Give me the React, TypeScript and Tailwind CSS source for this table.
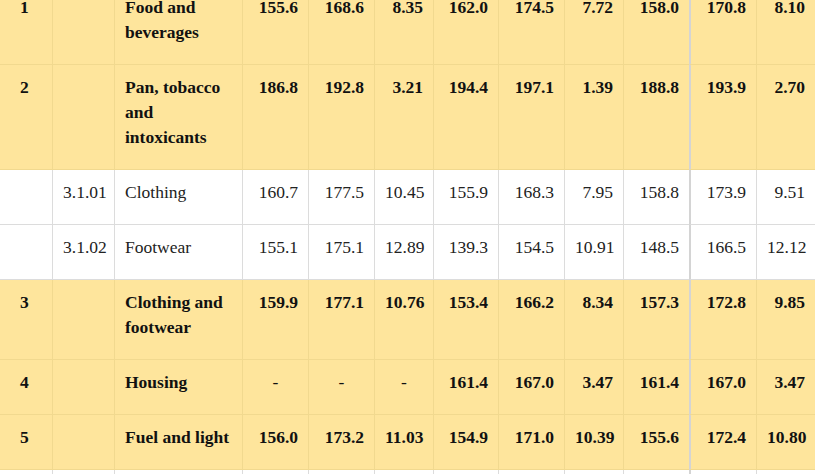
import React from 'react';

type Row = {
  code: string;
  sub: string;
  name: string;
  values: string[];
  group: boolean;
};

const rows: Row[] = [
  { code: '1', sub: '', name: 'Food and beverages', values: ['155.6', '168.6', '8.35', '162.0', '174.5', '7.72', '158.0', '170.8', '8.10'], group: true },
  { code: '2', sub: '', name: 'Pan, tobacco and intoxicants', values: ['186.8', '192.8', '3.21', '194.4', '197.1', '1.39', '188.8', '193.9', '2.70'], group: true },
  { code: '', sub: '3.1.01', name: 'Clothing', values: ['160.7', '177.5', '10.45', '155.9', '168.3', '7.95', '158.8', '173.9', '9.51'], group: false },
  { code: '', sub: '3.1.02', name: 'Footwear', values: ['155.1', '175.1', '12.89', '139.3', '154.5', '10.91', '148.5', '166.5', '12.12'], group: false },
  { code: '3', sub: '', name: 'Clothing and footwear', values: ['159.9', '177.1', '10.76', '153.4', '166.2', '8.34', '157.3', '172.8', '9.85'], group: true },
  { code: '4', sub: '', name: 'Housing', values: ['-', '-', '-', '161.4', '167.0', '3.47', '161.4', '167.0', '3.47'], group: true },
  { code: '5', sub: '', name: 'Fuel and light', values: ['156.0', '173.2', '11.03', '154.9', '171.0', '10.39', '155.6', '172.4', '10.80'], group: true },
  { code: '', sub: '', name: '', values: ['', '', '', '', '', '', '', '', ''], group: false },
];

const grid = 'grid grid-cols-[52px_62px_128px_66px_66px_59px_65px_66px_59px_66px_67px_59px] w-[815px]';

const TableRow = ({ row }: { row: Row }) => {
  const bg = row.group ? 'bg-[#fee59c] font-bold text-[#111]' : 'bg-white font-normal text-[#222]';
  const line = row.group ? 'border-[#f1d98f]' : 'border-[#dcdcdc]';
  const cell = `pt-[10px] pb-[19px] border-b ${line}`;

  return (
    <div className={`${grid} ${bg}`}>
      <div className={`${cell} pl-[20px] pr-[10px]`}>{row.code}</div>
      <div className={`${cell} border-l px-[10px]`}>{row.sub}</div>
      <div className={`${cell} border-l px-[10px]`}>{row.name}</div>
      {row.values.map((v, i) => (
        <div
          key={i}
          className={`${cell} px-[10px] ${i === 7 ? 'border-l-2 border-l-[#d4d4d4]' : 'border-l'} ${
            v === '-' ? 'text-center font-normal' : 'text-right'
          }`}
        >
          {v}
        </div>
      ))}
    </div>
  );
};

const App = () => {
  return (
    <div className="h-[474px] w-[819px] overflow-hidden bg-white">
      <div className="-mt-[15px] font-['Liberation_Serif'] text-[17.5px] leading-[25px]">
        {rows.map((row, i) => (
          <TableRow key={i} row={row} />
        ))}
      </div>
    </div>
  );
};

export default App;
